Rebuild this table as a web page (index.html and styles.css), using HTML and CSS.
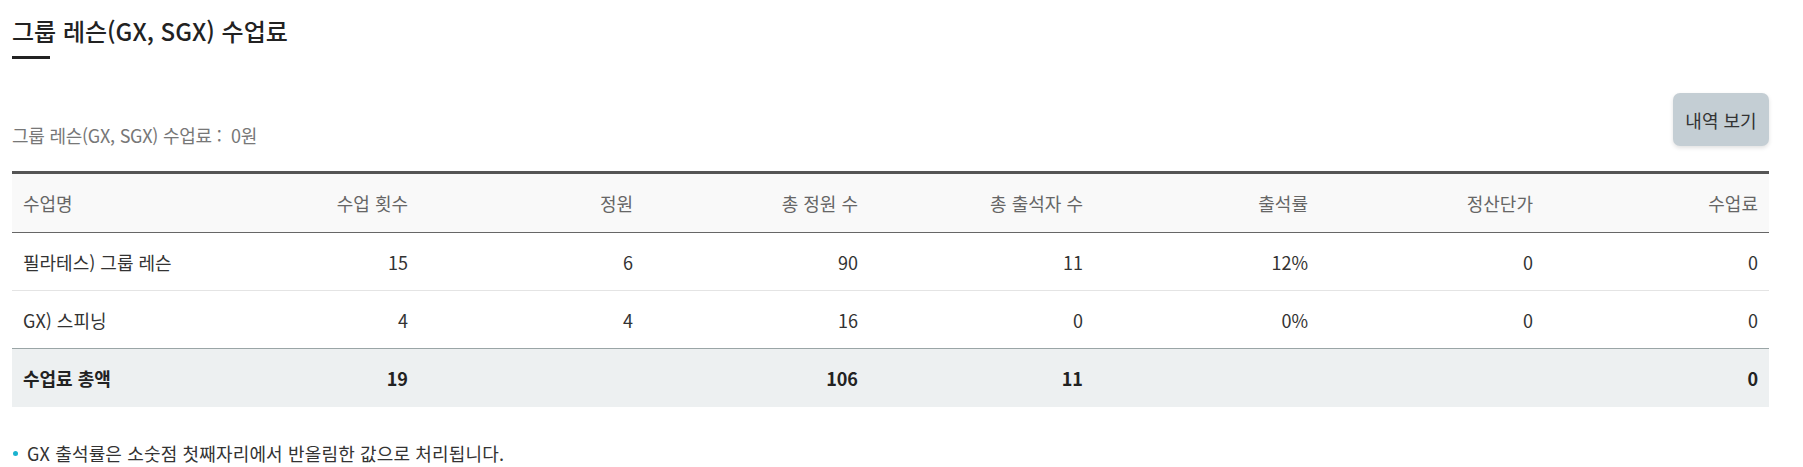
FILE: index.html
```html
<!DOCTYPE html>
<html lang="ko">
<head>
<meta charset="utf-8">
<link rel="stylesheet" href="styles.css">
</head>
<body>
<div class="wrap">
  <h2 class="title">그룹 레슨(GX, SGX) 수업료</h2>
  <div class="summary">
    <p class="summary-text">그룹 레슨(GX, SGX) 수업료 :&nbsp;&nbsp;0원</p>
    <button class="btn">내역 보기</button>
  </div>
  <table class="fee-table">
    <colgroup>
      <col class="col-name">
      <col><col><col><col><col><col><col>
    </colgroup>
    <thead>
      <tr>
        <th class="left">수업명</th>
        <th>수업 횟수</th>
        <th>정원</th>
        <th>총 정원 수</th>
        <th>총 출석자 수</th>
        <th>출석률</th>
        <th>정산단가</th>
        <th>수업료</th>
      </tr>
    </thead>
    <tbody>
      <tr class="row-a">
        <td class="left">필라테스) 그룹 레슨</td>
        <td>15</td><td>6</td><td>90</td><td>11</td><td>12%</td><td>0</td><td>0</td>
      </tr>
      <tr class="row-b">
        <td class="left">GX) 스피닝</td>
        <td>4</td><td>4</td><td>16</td><td>0</td><td>0%</td><td>0</td><td>0</td>
      </tr>
    </tbody>
    <tfoot>
      <tr>
        <td class="left">수업료 총액</td>
        <td>19</td><td></td><td>106</td><td>11</td><td></td><td></td><td>0</td>
      </tr>
    </tfoot>
  </table>
  <ul class="notes">
    <li>GX 출석률은 소숫점 첫째자리에서 반올림한 값으로 처리됩니다.</li>
  </ul>
</div>
</body>
</html>
```

FILE: styles.css
```css
* { box-sizing: border-box; }
html, body { margin: 0; padding: 0; background: #fff; }
body {
  font-family: "Noto Sans CJK KR", "Noto Sans", sans-serif;
  color: #333;
}
.wrap {
  padding: 14px 34px 0 12px;
}
.title {
  margin: 0;
  font-size: 24px;
  line-height: 34px;
  font-weight: 500;
  color: #222;
  position: relative;
  padding-bottom: 11px;
}
.title::after {
  content: "";
  display: block;
  width: 38px;
  height: 3px;
  background: #222;
  margin-top: 8px;
}
.summary {
  display: flex;
  justify-content: space-between;
  align-items: flex-end;
  margin-top: 23px;
  margin-bottom: 25px;
}
.summary-text {
  margin: 0;
  font-size: 18px;
  line-height: 22px;
  color: #777;
  letter-spacing: -0.25px;
}
.btn {
  width: 96px;
  height: 53px;
  border: 0;
  border-radius: 7px;
  background: #c4ced4;
  box-shadow: 0 2px 4px rgba(0, 0, 0, 0.12);
  font-family: inherit;
  font-size: 18px;
  color: #333;
  padding: 0;
}
.fee-table {
  width: 100%;
  border-collapse: collapse;
  table-layout: fixed;
  border-top: 3px solid #555;
}
.col-name { width: 182px; }
.fee-table th,
.fee-table td {
  text-align: right;
  padding: 0 11px;
  font-size: 18px;
  white-space: nowrap;
}
.fee-table .left { text-align: left; }
.fee-table thead th {
  height: 60px;
  background: #f9f9f9;
  font-weight: 400;
  color: #666;
  border-bottom: 1px solid #666;
}
.fee-table tbody td {
  height: 58px;
  color: #333;
}
.fee-table .row-a td { border-bottom: 1px solid #e4e4e4; }
.fee-table .row-b td { border-bottom: 1px solid #9aa5a6; }
.fee-table tfoot td {
  height: 58px;
  background: #edf0f1;
  font-weight: 700;
  color: #222;
}
.notes {
  list-style: none;
  margin: 34px 0 0;
  padding: 0;
}
.notes li {
  position: relative;
  padding-left: 15px;
  font-size: 18px;
  line-height: 24px;
  color: #333;
  letter-spacing: 0.15px;
}
.notes li::before {
  content: "";
  position: absolute;
  left: 1px;
  top: 10px;
  width: 5px;
  height: 5px;
  border-radius: 50%;
  background: #1ab2cf;
}
```
